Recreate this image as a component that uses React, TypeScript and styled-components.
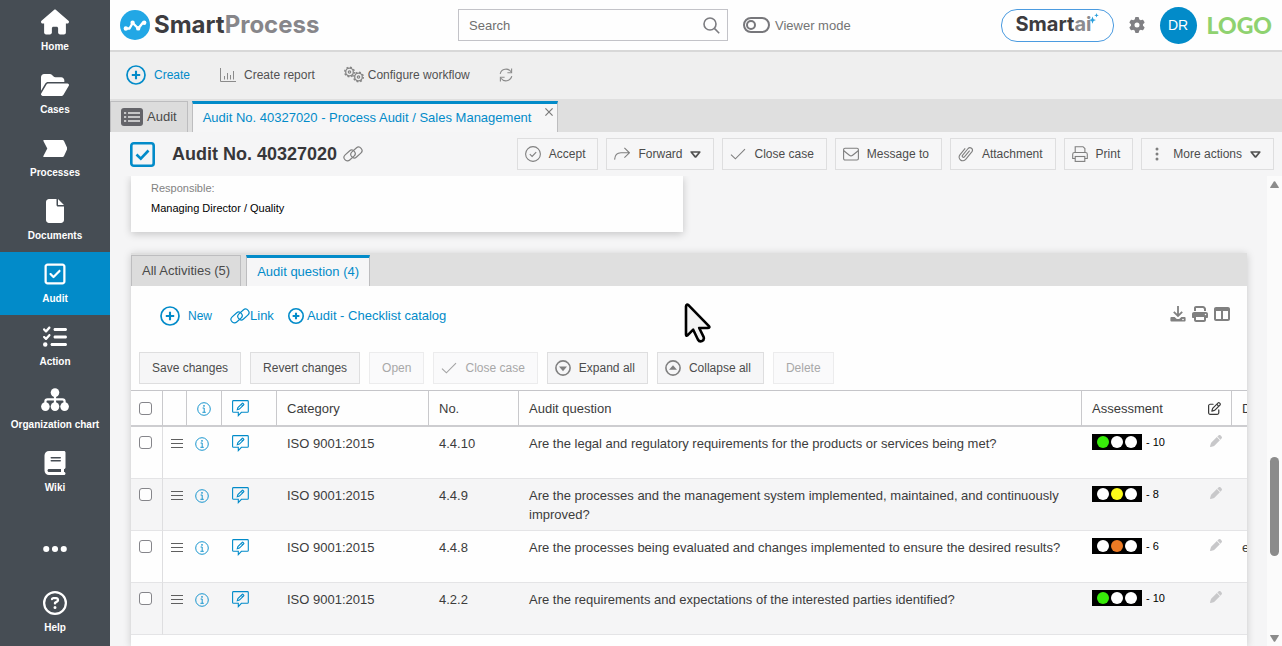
import React from 'react';
import styled, { createGlobalStyle, css } from 'styled-components';
import {
  FaHouse,
  FaFolderOpen,
  FaFile,
  FaRegSquareCheck,
  FaListCheck,
  FaBook,
  FaEllipsis,
  FaRegCircleQuestion,
  FaGear,
  FaPrint,
  FaTableColumns,
  FaPen,
  FaRegPenToSquare,
} from 'react-icons/fa6';

const BLUE = '#028bc9';
const GREY = '#808080';

const GlobalStyle = createGlobalStyle`
  *, *::before { box-sizing: border-box; }
  body { margin: 0; background: #f5f5f6; color: #3c3c3c; font-family: "Liberation Sans", Arial, sans-serif; font-size: 13px; }
  button, input { font-family: inherit; }
  svg { display: block; flex: none; }
`;

/* ---------- shell ---------- */
const Shell = styled.div`
  display: flex;
  height: 100vh;
  overflow: hidden;
`;
const Sidebar = styled.nav`
  width: 110px;
  flex: none;
  display: flex;
  flex-direction: column;
  background: #464d54;
`;
const SideItem = styled.a<{ $active?: boolean }>`
  height: 63px;
  flex: none;
  display: flex;
  flex-direction: column;
  align-items: center;
  padding-top: 8px;
  gap: 4px;
  color: #fff;
  font-size: 10px;
  line-height: 13px;
  font-weight: bold;
  text-decoration: none;
  white-space: nowrap;
  background: ${(p) => (p.$active ? BLUE : 'transparent')};
`;
const SideIcon = styled.span`
  height: 28px;
  display: flex;
  align-items: center;
`;
const SideMore = styled.button`
  margin-top: 28px;
  height: 34px;
  flex: none;
  border: 0;
  padding: 0;
  background: none;
  color: #fff;
  display: flex;
  align-items: center;
  justify-content: center;
`;
const SideFoot = styled.div`
  margin-top: auto;
  padding-bottom: 2px;
`;
const Main = styled.main`
  flex: 1;
  min-width: 0;
  display: flex;
  flex-direction: column;
`;

/* ---------- header ---------- */
const Header = styled.header`
  height: 52px;
  flex: none;
  display: flex;
  align-items: center;
  padding: 0 10px;
  background: #fefefe;
  border-bottom: 2px solid #d8d8d8;
`;
const Brand = styled.div`
  display: flex;
  align-items: center;
  gap: 4px;
  width: 338px;
`;
const BrandName = styled.span`
  font-family: Inter, sans-serif;
  font-weight: bold;
  font-size: 24px;
  line-height: 30px;
  color: #3d3c40;
  em { font-style: normal; color: #87868a; }
`;
const Search = styled.label`
  width: 270px;
  height: 32px;
  display: flex;
  align-items: center;
  border: 1px solid #c3c3c8;
  padding: 0 7px 0 10px;
  input { flex: 1; min-width: 0; border: 0; outline: 0; padding: 0; background: none; font-size: 13px; color: #555; }
  input::placeholder { color: #6f6f6f; opacity: 1; }
`;
const Toggle = styled.label`
  display: flex;
  align-items: center;
  gap: 5px;
  margin-left: 15px;
  font-size: 13px;
  color: #747474;
  input {
    appearance: none;
    margin: 0;
    width: 27px;
    height: 16px;
    border: 2px solid #77777b;
    border-radius: 8px;
    display: flex;
    align-items: center;
  }
  input::before {
    content: "";
    width: 10px;
    height: 10px;
    margin-left: 1px;
    border: 2px solid #77777b;
    border-radius: 50%;
  }
`;
const HeaderEnd = styled.div`
  margin-left: auto;
  display: flex;
  align-items: center;
`;
const SmartAi = styled.button`
  position: relative;
  width: 113px;
  height: 33px;
  border: 1px solid #4b9be0;
  border-radius: 16px;
  background: #fff;
  padding: 0 14px 3px;
  text-align: left;
  font-family: Inter, sans-serif;
  font-weight: bold;
  font-size: 20px;
  line-height: 28px;
  color: #3d3c40;
  em { font-style: normal; color: #8b8b8f; }
`;
const Spark = styled.svg`
  position: absolute;
  left: 87px;
  top: 3px;
`;
const GearButton = styled.button`
  border: 0;
  background: none;
  padding: 0;
  margin: 0 15px;
  color: #808084;
`;
const Avatar = styled.button`
  width: 37px;
  height: 37px;
  border: 0;
  border-radius: 50%;
  padding: 0;
  background: ${BLUE};
  color: #fff;
  font-size: 14px;
`;
const ClientLogo = styled.span`
  margin-left: 10px;
  font-family: Lato, sans-serif;
  font-weight: 900;
  font-size: 23px;
  line-height: 28px;
  color: #8fd270;
`;

/* ---------- toolbar and tabs ---------- */
const Toolbar = styled.div`
  height: 47px;
  flex: none;
  display: flex;
  align-items: center;
  gap: 29px;
  padding: 0 16px 2px;
  background: #efefef;
`;
const ToolButton = styled.button<{ $blue?: boolean; $gap?: number }>`
  display: flex;
  align-items: center;
  gap: ${(p) => p.$gap ?? 8}px;
  border: 0;
  padding: 0;
  background: none;
  font-size: 12px;
  line-height: 16px;
  color: ${(p) => (p.$blue ? BLUE : '#525252')};
  white-space: nowrap;
`;
const TabStrip = styled.div<{ $gap: number }>`
  height: 33px;
  flex: none;
  display: flex;
  align-items: stretch;
  gap: ${(p) => p.$gap}px;
  padding-top: 2px;
  background: #dfdfdf;
`;
const Tab = styled.button<{ $active?: boolean; $closable?: boolean }>`
  position: relative;
  display: flex;
  align-items: center;
  gap: 4px;
  padding: 0 ${(p) => (p.$closable ? 26 : 10)}px 0 10px;
  border: 1px solid #bdbdbf;
  border-bottom: 0;
  background: #dcdcdc;
  color: #4a4a4a;
  font-size: 13px;
  line-height: 16px;
  white-space: nowrap;
  ${(p) =>
    p.$active &&
    css`
      border-top: 3px solid ${BLUE};
      background: #f6f6f7;
      color: ${BLUE};
    `}
`;
const CloseMark = styled.span`
  position: absolute;
  right: 4px;
  top: 4px;
`;
const TitleRow = styled.div`
  height: 44px;
  flex: none;
  display: flex;
  align-items: center;
  padding: 0 8px 0 20px;
  background: #f5f5f6;
`;
const Title = styled.h1`
  margin: 0 6px 0 17px;
  font-size: 18px;
  line-height: 22px;
  color: #37373a;
  white-space: nowrap;
`;
const Actions = styled.div`
  margin-left: auto;
  display: flex;
  gap: 8px;
`;
const ActionButton = styled.button<{ $plain?: boolean }>`
  height: 32px;
  display: flex;
  align-items: center;
  gap: 8px;
  padding: 0 12px 0 ${(p) => (p.$plain ? 12 : 7)}px;
  border: 1px solid #dededf;
  background: #f6f6f7;
  color: #4c4c4c;
  font-size: 12px;
  line-height: 16px;
  white-space: nowrap;
  &:disabled { color: #a8a8a8; background: #fafafb; border-color: #ececed; }
  &:disabled svg { opacity: 0.7; }
`;

/* ---------- scroll region ---------- */
const ScrollArea = styled.div`
  flex: 1;
  min-height: 0;
  display: flex;
`;
const Content = styled.div`
  flex: 1;
  min-width: 0;
  overflow: hidden;
  display: flex;
  flex-direction: column;
  gap: 21px;
  padding: 0 20px 0 21px;
`;
const ScrollBar = styled.div`
  width: 15px;
  flex: none;
  display: flex;
  flex-direction: column;
  align-items: center;
  padding: 5px 0 4px;
  background: #fbfbfb;
`;
const Gap = styled.span<{ $grow: number }>`
  flex: ${(p) => p.$grow} 1 0;
`;
const Thumb = styled.span`
  width: 9px;
  flex: 99 1 0;
  border-radius: 5px;
  background: #8b8b8b;
`;
const CardGrid = styled.div`
  display: grid;
  grid-template-columns: 1fr 1fr;
  gap: 12px;
  flex: none;
`;
const Card = styled.section`
  padding: 6px 20px 17px;
  background: #fefefe;
  box-shadow: 0 2px 8px rgba(0, 0, 0, 0.2);
  font-size: 11px;
  dl { margin: 0; }
  dt { color: #828282; line-height: 13px; }
  dd { margin: 7px 0 0; color: #000; line-height: 13px; }
`;
const Panel = styled.section`
  position: relative;
  flex: 1 0 auto;
  background: #fefefe;
  box-shadow: 0 1px 8px rgba(0, 0, 0, 0.18);
`;
const PanelTools = styled.div`
  height: 60px;
  display: flex;
  align-items: center;
  justify-content: space-between;
  padding: 0 17px 0 29px;
`;
const ToolLinks = styled.div`
  display: flex;
  align-items: center;
`;
const ToolLink = styled.a<{ $gap: number; $small?: boolean }>`
  display: flex;
  align-items: center;
  gap: ${(p) => p.$gap}px;
  margin-right: ${(p) => (p.$small ? 18 : 14)}px;
  color: ${BLUE};
  text-decoration: none;
  font-size: ${(p) => (p.$small ? 12 : 13)}px;
  line-height: 16px;
`;
const IconLinks = styled.div`
  display: flex;
  gap: 6px;
  padding-bottom: 4px;
  color: ${GREY};
`;
const IconButton = styled.button`
  border: 0;
  padding: 0;
  background: none;
  color: inherit;
`;
const ButtonBar = styled.div`
  display: flex;
  gap: 9px;
  padding: 6px 8px;
`;
const Cursor = styled.svg`
  position: absolute;
  left: 553px;
  top: 50px;
`;

/* ---------- table ---------- */
const TableClip = styled.div`
  overflow: hidden;
`;
const Table = styled.table`
  width: calc(100% + 65px);
  table-layout: fixed;
  border-collapse: separate;
  border-spacing: 0;
  th, td { text-align: left; font-weight: normal; }
`;
const HeadCell = styled.th<{ $left?: number }>`
  height: 37px;
  padding: 1px 10px 0 ${(p) => p.$left ?? 10}px;
  vertical-align: middle;
  border-top: 1px solid #c5c5c9;
  border-bottom: 2px solid #cdcdd0;
  border-right: 1px solid #c9c9cc;
  color: #3c3c3c;
`;
const Row = styled.tr`
  &:nth-child(even) { background: #f5f5f6; }
  td:first-child { border-right: 1px solid #dedee0; }
`;
const Cell = styled.td`
  height: 52px;
  padding: 7px 10px 5px;
  vertical-align: top;
  line-height: 19px;
  border-bottom: 1px solid #e4e4e6;
`;
const IconCell = styled(Cell)<{ $left: number; $top: number }>`
  padding: ${(p) => p.$top}px 0 0 ${(p) => p.$left}px;
`;
const Spread = styled.div`
  display: flex;
  align-items: center;
  justify-content: space-between;
  height: 16px;
  color: #3a3a3a;
`;
const Tick = styled.input`
  appearance: none;
  display: block;
  width: 13px;
  height: 13px;
  margin: 0;
  border: 1px solid #85858a;
  border-radius: 3px;
  background: #fefefe;
`;
const Rating = styled.span`
  display: flex;
  align-items: center;
  gap: 4px;
  font-size: 11px;
  line-height: 16px;
  color: #000;
`;
const Lights = styled.span`
  display: flex;
  align-items: center;
  justify-content: center;
  gap: 2px;
  width: 50px;
  height: 16px;
  background: #000;
`;
const Light = styled.i<{ $on?: string }>`
  width: 12px;
  height: 12px;
  border-radius: 50%;
  background: ${(p) => p.$on || '#fff'};
`;
const PencilButton = styled(IconButton)`
  padding-bottom: 2px;
  color: #c8c8ca;
`;

/* ---------- drawn icons ---------- */
const PlusCircle = ({ size = 20 }: { size?: number }) => (
  <svg width={size} height={size} viewBox="0 0 20 20" fill="none" stroke="currentColor" strokeWidth={size < 20 ? 2 : 1.7}>
    <circle cx="10" cy="10" r="9" />
    <path d="M10 5.8v8.4M5.8 10h8.4" strokeWidth={size < 20 ? 2.6 : 2.1} />
  </svg>
);
const ChainIcon = ({ color = GREY }: { color?: string }) => (
  <svg width="20" height="16" viewBox="0 0 20 16" fill="none" stroke={color} strokeWidth="1.2">
    <rect x="0.3" y="6.1" width="12.6" height="6.8" rx="3.4" transform="rotate(-42 6.6 9.5)" />
    <rect x="7.1" y="3.100" width="12.6" height="6.8" rx="3.4" transform="rotate(-42 13.4 6.5)" />
  </svg>
);
const ChartIcon = () => (
  <svg width="17" height="16" viewBox="0 0 17 16" fill="none" stroke="#8b8b8b">
    <path d="M1.5 1v13.5H17M5.5 12.5V9M8.5 12.5V6M11.5 12.5V8M14.5 12.5V4" />
  </svg>
);
const CogShape = ({ x, y }: { x: number; y: number }) => (
  <g transform={`translate(${x} ${y})`} fill="none" stroke="#858585">
    <circle r="3.8" strokeWidth="1.3" />
    <circle r="4.8" strokeWidth="1.4" strokeDasharray="1.885 1.885" />
    <circle r="1.2" strokeWidth="1.2" />
  </g>
);
const CogsIcon = () => (
  <svg width="20" height="17" viewBox="0 0 20 17">
    <CogShape x={5.5} y={6} />
    <CogShape x={14.5} y={11} />
  </svg>
);
const RefreshIcon = () => (
  <svg width="14" height="14" viewBox="0 0 14 14" fill="none" stroke="#8b8b8b" strokeWidth="1.1">
    <path d="M1.2 5.8A6 6 0 0 1 12 3.8M12.8 8.2A6 6 0 0 1 2 10.2" />
    <path d="M12.6 .6v4.2H8.4M1.4 13.4V9.2h4.2" />
  </svg>
);
const SearchIcon = () => (
  <svg width="17" height="17" viewBox="0 0 17 17" fill="none" stroke="#7c7c80" strokeWidth="1.6">
    <circle cx="7" cy="7" r="6" />
    <path d="M11.4 11.4 16.2 16.2" />
  </svg>
);
const ListBox = () => (
  <svg width="22" height="18" viewBox="0 0 22 18">
    <rect width="22" height="18" rx="3" fill="#646469" />
    <g stroke="#e6e6e6" strokeWidth="1.5">
      <path d="M3 5h2.2M3 9h2.2M3 13h2.2M7 5h12M7 9h12M7 13h12" />
    </g>
  </svg>
);
const AcceptIcon = () => (
  <svg width="16" height="16" viewBox="0 0 16 16" fill="none" stroke="#7f7f7f" strokeWidth="1.1">
    <circle cx="8" cy="8" r="7.4" />
    <path d="m4.8 8.2 2.3 2.2 4.1-4.3" />
  </svg>
);
const ForwardIcon = () => (
  <svg width="16" height="16" viewBox="0 0 16 16" fill="none" stroke="#7f7f7f" strokeWidth="1.1">
    <path d="M.6 13.6C.9 9 3.2 6.8 7 6.8h8.2M10.4 1.9l5 4.9-5 4.9" />
  </svg>
);
const CheckIcon = () => (
  <svg width="16" height="16" viewBox="0 0 16 16" fill="none" stroke="#7f7f7f" strokeWidth="1.1">
    <path d="m1 8.6 4.4 4.2L15 3.2" />
  </svg>
);
const MailIcon = () => (
  <svg width="16" height="16" viewBox="0 0 16 16" fill="none" stroke="#7f7f7f" strokeWidth="1.1">
    <rect x=".6" y="2.2" width="14.8" height="11.8" rx="1.4" />
    <path d="m.8 4.8 5.6 4.4c1 .8 2.2.8 3.2 0l5.6-4.4" />
  </svg>
);
const ClipIcon = () => (
  <svg width="16" height="16" viewBox="0 0 16 16" fill="none" stroke="#7f7f7f" strokeWidth="1.1">
    <path d="m11.600 4.600-5.200 6.200a1.200 1.200 0 0 1-1.900-1.500l5.600-6.800a2.500 2.500 0 0 1 3.900 3.100l-6.300 7.800a3.700 3.700 0 0 1-5.800-4.600L7.200 2.400" />
  </svg>
);
const PrintIcon = () => (
  <svg width="16" height="16" viewBox="0 0 16 16" fill="none" stroke="#7f7f7f" strokeWidth="1.1">
    <path d="M3.2 6.5V.7h7.800l1.900 1.900v3.900M3.200 12.500H.7V8.300c0-1 .8-1.800 1.800-1.800h11c1 0 1.800.8 1.800 1.800v4.200h-2.500" />
    <rect x="3.2" y="10.5" width="9.6" height="4.9" />
  </svg>
);
const DotsIcon = () => (
  <svg width="16" height="16" viewBox="0 0 16 16" fill="#7f7f7f">
    <circle cx="8" cy="3" r="1.5" />
    <circle cx="8" cy="8" r="1.5" />
    <circle cx="8" cy="13" r="1.5" />
  </svg>
);
const Caret = () => (
  <svg width="11" height="8" viewBox="0 0 11 8" fill="none" stroke="#525252" strokeWidth="1.7" strokeLinejoin="round">
    <path d="M1.200 2h8.600L6 6.600q-.5.500-1 0z" />
  </svg>
);
const RoundArrow = ({ up }: { up?: boolean }) => (
  <svg width="16" height="16" viewBox="0 0 16 16">
    <circle cx="8" cy="8" r="7.1" fill="none" stroke="#808080" strokeWidth="1.6" />
    <path fill="#808080" d={up ? 'M4 9.800 8 5.200l4 4.600z' : 'M4 6.600h8L8 11.200z'} />
  </svg>
);
const InfoIcon = () => (
  <svg width="14" height="14" viewBox="0 0 14 14" fill="none" stroke={BLUE}>
    <circle cx="7" cy="7" r="6.3" strokeWidth=".9" />
    <path d="M5.600 6h1.600v4.200M5.400 10.300h3.400" strokeWidth=".9" />
    <circle cx="7" cy="3.9" r=".8" fill={BLUE} stroke="none" />
  </svg>
);
const CommentIcon = () => (
  <svg width="17" height="17" viewBox="0 0 17 17" fill="none" stroke={BLUE} strokeWidth="1.1">
    <path d="M1.500.6h13.900q.9 0 .9.900v9.900q0 .9-.9.900H9.400L6.300 15.600v-3.300H1.500q-.9 0-.9-.9V1.500q0-.9.900-.9z" />
    <path d="m5.300 9.700.6-2.100 4.300-4.200q.4-.4.800 0l.700.700q.4.400 0 .8L7.400 9.100z" />
    <path d="m9.300 4.300 1.500 1.500" />
  </svg>
);
const LinesIcon = () => (
  <svg width="12" height="11" viewBox="0 0 12 11" stroke="#5f5f5f" fill="none">
    <path d="M0 1.500h12M0 5.500h12M0 9.500h12" />
  </svg>
);
const DownloadTray = () => (
  <svg width="16" height="16" viewBox="0 0 16 16" fill="none" stroke="currentColor" strokeWidth="1.8">
    <path d="M8 0v9.600M3.800 5.800 8 10l4.200-4.200" />
    <path d="M1.400 11h3.200L6.800 13h2.400l2.200-2h3.200q1 0 1 1v2.600q0 1-1 1H1.400q-1 0-1-1V12q0-1 1-1z" fill="currentColor" stroke="none" />
    <circle cx="13" cy="13.5" r=".8" fill="#fff" stroke="none" />
  </svg>
);
const OrgIcon = () => (
  <svg width="28" height="24" viewBox="0 0 28 24" fill="#fff">
    <circle cx="14" cy="4.6" r="4.3" />
    <circle cx="4.4" cy="18.6" r="4.3" />
    <circle cx="14" cy="18.6" r="4.3" />
    <circle cx="23.6" cy="18.6" r="4.3" />
    <path d="M14 7v9M4.400 16v-2.400q0-2.200 2.200-2.200h14.800q2.200 0 2.200 2.200V16" fill="none" stroke="#fff" strokeWidth="2.2" />
  </svg>
);
const ProcessIcon = () => (
  <svg width="24" height="17" viewBox="0 0 24 17" fill="#fff">
    <path d="M1 0h18.500q1 0 1.500 1l3 6.500q.4 1 0 2l-3 6.500q-.5 1-1.500 1H1q-1 0-.6-1L4.300 8.500.4 1Q0 0 1 0z" />
  </svg>
);
const BrandMark = () => (
  <svg width="30" height="30" viewBox="0 0 30 30">
    <circle cx="15" cy="15" r="15" fill="#22a7e5" />
    <g fill="#fff" stroke="#fff" strokeWidth="2.4" strokeLinecap="round" strokeLinejoin="round">
      <path fill="none" d="M6 18.500h3.500L12.700 13l5.600 5.500 4.500-5.800H25" />
      <circle cx="5.8" cy="18.5" r="1" />
      <circle cx="12.6" cy="12.8" r="1" />
      <circle cx="18.2" cy="18.4" r="1" />
      <circle cx="24.2" cy="12.7" r="1" />
    </g>
  </svg>
);
const ScrollArrow = ({ down }: { down?: boolean }) => (
  <svg width="9" height="7" viewBox="0 0 9 7" fill="#8b8b8b">
    <path d={down ? 'M.4 0h8.200q.5.300.2.800L5.200 6.400q-.7.900-1.400 0L.2.800Q-.1.300.4 0z' : 'M.4 7h8.200q.5-.3.2-.8L5.200.6q-.7-.9-1.400 0L.2 6.200q-.3.500.2.800z'} />
  </svg>
);

const NAV = [
  { label: 'Home', icon: <FaHouse size={28} /> },
  { label: 'Cases', icon: <FaFolderOpen size={28} /> },
  { label: 'Processes', icon: <ProcessIcon /> },
  { label: 'Documents', icon: <FaFile size={24} /> },
  { label: 'Audit', icon: <FaRegSquareCheck size={24} />, active: true },
  { label: 'Action', icon: <FaListCheck size={24} /> },
  { label: 'Organization chart', icon: <OrgIcon /> },
  { label: 'Wiki', icon: <FaBook size={24} /> },
];

const COLORS: Record<string, string> = { green: '#38ec0a', yellow: '#fdfb1a', orange: '#ec7a24' };

const ROWS = [
  { no: '4.4.10', question: 'Are the legal and regulatory requirements for the products or services being met?', pos: 0, color: 'green', score: 10, extra: '' },
  { no: '4.4.9', question: 'Are the processes and the management system implemented, maintained, and continuously improved?', pos: 1, color: 'yellow', score: 8, extra: '' },
  { no: '4.4.8', question: 'Are the processes being evaluated and changes implemented to ensure the desired results?', pos: 1, color: 'orange', score: 6, extra: 'e' },
  { no: '4.2.2', question: 'Are the requirements and expectations of the interested parties identified?', pos: 0, color: 'green', score: 10, extra: '' },
];

export default function App() {
  return (
    <>
      <GlobalStyle />
      <Shell>
        <Sidebar>
          {NAV.map((item) => (
            <SideItem key={item.label} href="#" $active={item.active}>
              <SideIcon>{item.icon}</SideIcon>
              {item.label}
            </SideItem>
          ))}
          <SideMore aria-label="More">
            <FaEllipsis size={28} />
          </SideMore>
          <SideFoot>
            <SideItem href="#">
              <SideIcon>
                <FaRegCircleQuestion size={24} />
              </SideIcon>
              Help
            </SideItem>
          </SideFoot>
        </Sidebar>

        <Main>
          <Header>
            <Brand>
              <BrandMark />
              <BrandName>
                Smart<em>Process</em>
              </BrandName>
            </Brand>
            <Search>
              <input type="text" placeholder="Search" aria-label="Search" />
              <SearchIcon />
            </Search>
            <Toggle>
              <input type="checkbox" />
              Viewer mode
            </Toggle>
            <HeaderEnd>
              <SmartAi>
                Smart<em>ai</em>
                <Spark width="10" height="11" viewBox="0 0 10 11" fill="#2a9fdc">
                  <path d="M3.500 3.500 4.500 6.200 7 7 4.500 8 3.500 10.700 2.500 8 0 7l2.500-.8zM7.500 0l.6 1.700 1.700.6-1.700.6-.6 1.700-.6-1.700-1.700-.6 1.700-.6z" />
                </Spark>
              </SmartAi>
              <GearButton aria-label="Settings">
                <FaGear size={16} />
              </GearButton>
              <Avatar>DR</Avatar>
              <ClientLogo>LOGO</ClientLogo>
            </HeaderEnd>
          </Header>

          <Toolbar>
            <ToolButton $blue>
              <PlusCircle />
              Create
            </ToolButton>
            <ToolButton>
              <ChartIcon />
              Create report
            </ToolButton>
            <ToolButton $gap={4}>
              <CogsIcon />
              Configure workflow
            </ToolButton>
            <ToolButton aria-label="Refresh">
              <RefreshIcon />
            </ToolButton>
          </Toolbar>

          <TabStrip $gap={4}>
            <Tab>
              <ListBox />
              Audit
            </Tab>
            <Tab $active $closable>
              Audit No. 40327020 - Process Audit / Sales Management
              <CloseMark>
                <svg width="8" height="8" viewBox="0 0 8 8" stroke="#7a7a7a" strokeWidth="1.2">
                  <path d="M.4.400l7.200 7.200M7.600.4.400 7.600" />
                </svg>
              </CloseMark>
            </Tab>
          </TabStrip>

          <TitleRow>
            <svg width="25" height="25" viewBox="0 0 25 25" fill="none" stroke={BLUE} strokeWidth="2.6">
              <rect x="1.3" y="1.3" width="22.4" height="22.4" rx="2.5" />
              <path d="m6.500 12.500 4.300 4.200 7.700-8.200" />
            </svg>
            <Title>Audit No. 40327020</Title>
            <ChainIcon />
            <Actions>
              <ActionButton><AcceptIcon />Accept</ActionButton>
              <ActionButton><ForwardIcon />Forward<Caret /></ActionButton>
              <ActionButton><CheckIcon />Close case</ActionButton>
              <ActionButton><MailIcon />Message to</ActionButton>
              <ActionButton><ClipIcon />Attachment</ActionButton>
              <ActionButton><PrintIcon />Print</ActionButton>
              <ActionButton><DotsIcon />More actions<Caret /></ActionButton>
            </Actions>
          </TitleRow>

          <ScrollArea>
            <Content>
              <CardGrid>
                <Card>
                  <dl>
                    <dt>Responsible:</dt>
                    <dd>Managing Director / Quality</dd>
                  </dl>
                </Card>
              </CardGrid>

              <Panel>
                <TabStrip $gap={5}>
                  <Tab>All Activities (5)</Tab>
                  <Tab $active>Audit question (4)</Tab>
                </TabStrip>

                <PanelTools>
                  <ToolLinks>
                    <ToolLink href="#" $gap={8} $small><PlusCircle />New</ToolLink>
                    <ToolLink href="#" $gap={0}><ChainIcon color={BLUE} />Link</ToolLink>
                    <ToolLink href="#" $gap={3}><PlusCircle size={16} />Audit - Checklist catalog</ToolLink>
                  </ToolLinks>
                  <IconLinks>
                    <IconButton aria-label="Download"><DownloadTray /></IconButton>
                    <IconButton aria-label="Print"><FaPrint size={16} /></IconButton>
                    <IconButton aria-label="Columns"><FaTableColumns size={16} /></IconButton>
                  </IconLinks>
                </PanelTools>

                <ButtonBar>
                  <ActionButton $plain>Save changes</ActionButton>
                  <ActionButton $plain>Revert changes</ActionButton>
                  <ActionButton $plain disabled>Open</ActionButton>
                  <ActionButton disabled><CheckIcon />Close case</ActionButton>
                  <ActionButton><RoundArrow />Expand all</ActionButton>
                  <ActionButton><RoundArrow up />Collapse all</ActionButton>
                  <ActionButton $plain disabled>Delete</ActionButton>
                </ButtonBar>

                <TableClip>
                  <Table>
                    <colgroup>
                      <col width={32} />
                      <col width={24} />
                      <col width={35} />
                      <col width={55} />
                      <col width={152} />
                      <col width={90} />
                      <col />
                      <col width={150} />
                      <col width={80} />
                    </colgroup>
                    <thead>
                      <tr>
                        <HeadCell $left={8}><Tick type="checkbox" aria-label="Select all" /></HeadCell>
                        <HeadCell />
                        <HeadCell><InfoIcon /></HeadCell>
                        <HeadCell><CommentIcon /></HeadCell>
                        <HeadCell>Category</HeadCell>
                        <HeadCell>No.</HeadCell>
                        <HeadCell>Audit question</HeadCell>
                        <HeadCell>
                          <Spread>
                            Assessment
                            <FaRegPenToSquare size={13} />
                          </Spread>
                        </HeadCell>
                        <HeadCell>D</HeadCell>
                      </tr>
                    </thead>
                    <tbody>
                      {ROWS.map((row) => (
                        <Row key={row.no}>
                          <IconCell $left={8} $top={9}><Tick type="checkbox" aria-label={`Select ${row.no}`} /></IconCell>
                          <IconCell $left={8} $top={11}><LinesIcon /></IconCell>
                          <IconCell $left={8} $top={10}><InfoIcon /></IconCell>
                          <IconCell $left={10} $top={8}><CommentIcon /></IconCell>
                          <Cell>ISO 9001:2015</Cell>
                          <Cell>{row.no}</Cell>
                          <Cell>{row.question}</Cell>
                          <Cell>
                            <Spread>
                              <Rating>
                                <Lights>
                                  {[0, 1, 2].map((i) => (
                                    <Light key={i} $on={i === row.pos ? COLORS[row.color] : undefined} />
                                  ))}
                                </Lights>
                                - {row.score}
                              </Rating>
                              <PencilButton aria-label={`Edit ${row.no}`}><FaPen size={12} /></PencilButton>
                            </Spread>
                          </Cell>
                          <Cell>{row.extra}</Cell>
                        </Row>
                      ))}
                    </tbody>
                  </Table>
                </TableClip>

                <Cursor width="28" height="41" viewBox="0 0 28 41">
                  <path
                    d="M2 3.500v28q0 2 1.700.7l5.500-5.500 4.700 9.800q1.500 2.700 4 1.600 2.700-1.300 1.700-4.200L15.200 25h8.300q3-.2 1.200-2.200L4.700 2.300Q2.300.5 2 3.500z"
                    fill="#f3f3f3"
                    stroke="#000"
                    strokeWidth="2.6"
                    strokeLinejoin="round"
                  />
                </Cursor>
              </Panel>
            </Content>
            <ScrollBar aria-hidden="true">
              <ScrollArrow />
              <Gap $grow={269} />
              <Thumb />
              <Gap $grow={79} />
              <ScrollArrow down />
            </ScrollBar>
          </ScrollArea>
        </Main>
      </Shell>
    </>
  );
}
